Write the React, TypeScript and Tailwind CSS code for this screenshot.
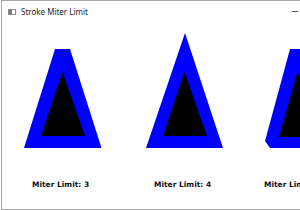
import React from "react";

interface Sample {
  label: string;
  outer: string;
  inner: string;
  labelPad: string;
}

const samples: Sample[] = [
  {
    label: "Miter Limit: 3",
    outer: "53,27 68,27 99.5,126 22,126",
    inner: "60.5,50 39,114 83,114",
    labelPad: "pl-[30px]",
  },
  {
    label: "Miter Limit: 4",
    outer: "61,11 99,126 22,126",
    inner: "60.5,50 39,114 83,114",
    labelPad: "pl-[30px]",
  },
  {
    label: "Miter Limit: 1",
    outer: "44,27 59,27 90.5,126 24,126 19,119",
    inner: "51.5,50 33,115 77,115",
    labelPad: "pl-[18px]",
  },
];

function Triangle({ outer, inner }: { outer: string; inner: string }) {
  return (
    <svg width="122" height="130" viewBox="0 0 122 130" className="block">
      <polygon points={outer} fill="#0000ff" />
      <polygon points={inner} fill="#000000" />
    </svg>
  );
}

export default function App() {
  return (
    <div className="w-[300px] h-[210px] overflow-hidden bg-white">
      <div className="ml-[1px] w-[320px] h-[210px] border-l border-b border-t border-[#a8a8a8] flex flex-col">
        {/* title bar */}
        <div className="h-[21px] flex items-center pl-[6px] relative">
          <div className="w-[8px] h-[6px] border border-[#8a8a8a] flex">
            <div className="w-[3px] h-full bg-[#6e7b86]" />
          </div>
          <span
            className="ml-[5px] text-[8px] text-[#222] leading-none"
            style={{ fontFamily: '"Noto Sans", "Liberation Sans", sans-serif' }}
          >
            Stroke Miter Limit
          </span>
          <div className="absolute left-[290px] top-[10px] w-[6px] h-[1px] bg-[#555]" />
        </div>

        {/* content */}
        <div className="flex">
          {samples.map((s) => (
            <div key={s.label} className="w-[122px] shrink-0 flex flex-col">
              <Triangle outer={s.outer} inner={s.inner} />
              <div
                className={`${s.labelPad} mt-[28px] text-[7.5px] font-bold leading-[9px] text-[#111] whitespace-nowrap`}
                style={{ fontFamily: '"DejaVu Sans", Verdana, sans-serif' }}
              >
                {s.label}
              </div>
            </div>
          ))}
        </div>
      </div>
    </div>
  );
}
